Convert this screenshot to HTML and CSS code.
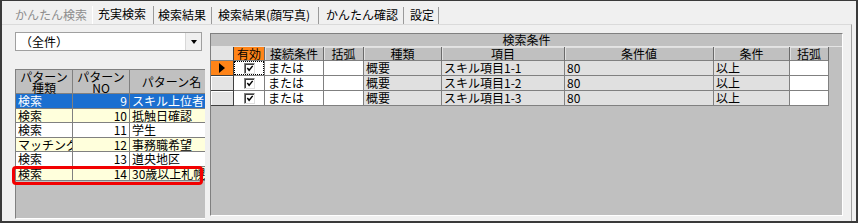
FILE: index.html
```html
<!DOCTYPE html>
<html lang="ja">
<head>
<meta charset="utf-8">
<link rel="stylesheet" href="styles.css">
</head>
<body>
<div class="window">
  <div class="tabs">
    <span class="tab tab-first disabled">かんたん検索</span>
    <span class="tab tab-active">充実検索</span>
    <span class="tab tab-3">検索結果</span>
    <span class="tab tab-4">検索結果(顔写真)</span>
    <span class="tab tab-5">かんたん確認</span>
    <span class="tab tab-6">設定</span>
  </div>
  <div class="panel">
    <div class="left">
      <div class="combo">
        <span class="combo-text">（全件）</span>
        <span class="combo-btn"><span class="down"></span></span>
      </div>
      <div class="lgrid">
        <div class="lhead">
          <div class="lc c1 two"><span class="ln">パターン</span><span class="ln">種類</span></div>
          <div class="lc c2 two"><span class="ln">パターン</span><span class="ln">NO</span></div>
          <div class="lc c3 one">パターン名</div>
        </div>
        <div class="lrow sel">
          <div class="lc c1">検索</div><div class="lc c2 num">9</div><div class="lc c3">スキル上位者</div>
        </div>
        <div class="lrow yel">
          <div class="lc c1">検索</div><div class="lc c2 num">10</div><div class="lc c3">抵触日確認</div>
        </div>
        <div class="lrow wht">
          <div class="lc c1">検索</div><div class="lc c2 num">11</div><div class="lc c3">学生</div>
        </div>
        <div class="lrow yel">
          <div class="lc c1">マッチング</div><div class="lc c2 num">12</div><div class="lc c3">事務職希望</div>
        </div>
        <div class="lrow wht">
          <div class="lc c1">検索</div><div class="lc c2 num">13</div><div class="lc c3">道央地区</div>
        </div>
        <div class="lrow yel">
          <div class="lc c1">検索</div><div class="lc c2 num">14</div><div class="lc c3">30歳以上札幌</div>
        </div>
      </div>
      <div class="mark"></div>
    </div>
    <div class="rgrid">
      <div class="caption">検索条件</div>
      <div class="rhead">
        <div class="rc w-sel selhead"></div>
        <div class="rc w-on hc orange">有効</div>
        <div class="rc w-conn hc">接続条件</div>
        <div class="rc w-par hc">括弧</div>
        <div class="rc w-kind hc">種類</div>
        <div class="rc w-item hc">項目</div>
        <div class="rc w-val hc">条件値</div>
        <div class="rc w-cond hc">条件</div>
        <div class="rc w-par2 hc">括弧</div>
      </div>
      <div class="rrow">
        <div class="rc w-sel selcell current"><span class="arrow"></span></div>
        <div class="rc w-on cbcell"><span class="focus"><span class="chk"><svg width="9" height="9" viewBox="0 0 9 9"><path d="M1.5 4 L3.5 6.5 L7.5 1.5" fill="none" stroke="#000" stroke-width="1.6"/></svg></span></span></div>
        <div class="rc w-conn wc">または</div>
        <div class="rc w-par wc"></div>
        <div class="rc w-kind gc">概要</div>
        <div class="rc w-item gc">スキル項目1-1</div>
        <div class="rc w-val gc">80</div>
        <div class="rc w-cond gc">以上</div>
        <div class="rc w-par2 wc"></div>
      </div>
      <div class="rrow">
        <div class="rc w-sel selcell"></div>
        <div class="rc w-on cbcell"><span class="nofocus"><span class="chk"><svg width="9" height="9" viewBox="0 0 9 9"><path d="M1.5 4 L3.5 6.5 L7.5 1.5" fill="none" stroke="#000" stroke-width="1.6"/></svg></span></span></div>
        <div class="rc w-conn wc">または</div>
        <div class="rc w-par wc"></div>
        <div class="rc w-kind gc">概要</div>
        <div class="rc w-item gc">スキル項目1-2</div>
        <div class="rc w-val gc">80</div>
        <div class="rc w-cond gc">以上</div>
        <div class="rc w-par2 wc"></div>
      </div>
      <div class="rrow">
        <div class="rc w-sel selcell"></div>
        <div class="rc w-on cbcell"><span class="nofocus"><span class="chk"><svg width="9" height="9" viewBox="0 0 9 9"><path d="M1.5 4 L3.5 6.5 L7.5 1.5" fill="none" stroke="#000" stroke-width="1.6"/></svg></span></span></div>
        <div class="rc w-conn wc">または</div>
        <div class="rc w-par wc"></div>
        <div class="rc w-kind gc">概要</div>
        <div class="rc w-item gc">スキル項目1-3</div>
        <div class="rc w-val gc">80</div>
        <div class="rc w-cond gc">以上</div>
        <div class="rc w-par2 wc"></div>
      </div>
    </div>
  </div>
</div>
</body>
</html>
```
FILE: styles.css
```css
* { box-sizing: border-box; }
html, body { margin: 0; padding: 0; }
body {
  width: 858px;
  height: 223px;
  overflow: hidden;
  font-family: "Noto Sans CJK JP", "Noto Sans", sans-serif;
  font-size: 12px;
  color: #000;
  background: #f0f0f0;
}
.window {
  width: 858px;
  height: 223px;
  border-top: 1px solid #3a3a3a;
  border-left: 2px solid #3a3a3a;
  border-right: 2px solid #3a3a3a;
  border-bottom: 2px solid #3a3a3a;
  background: #f0f0f0;
  display: flex;
  flex-direction: column;
}
.tabs {
  height: 23px;
  display: flex;
  align-items: flex-end;
}
.tab {
  height: 17px;
  line-height: 16px;
  white-space: nowrap;
  border-right: 1px solid #9a9a9a;
}
.tab-first { width: 90px; padding-left: 13px; border-right: none; color: #8d8d8d; }
.tab-active { width: 62px; padding-left: 5px; border-left: 1px solid #ffffff; height: 18px; }
.tab-3 { width: 58px; padding-left: 4px; }
.tab-4 { width: 107px; padding-left: 6px; }
.tab-5 { width: 85px; padding-left: 7px; }
.tab-6 { width: 35px; padding-left: 6px; }

.panel {
  flex: 1;
  margin-right: 4px;
  border-top: 1px solid #dadada;
  border-right: 1px solid #a0a0a0;
  padding: 7px 8px 2px 13px;
  display: flex;
  gap: 5px;
}
.left {
  width: 190px;
  position: relative;
  display: flex;
  flex-direction: column;
}
.combo {
  width: 187px;
  height: 19px;
  background: #fff;
  border: 1px solid #a0a0a0;
  display: flex;
  align-items: center;
  justify-content: space-between;
}
.combo-text { padding-left: 4px; line-height: 17px; }
.combo-btn {
  width: 16px;
  height: 17px;
  background: #f0f0f0;
  border-left: 1px solid #d8d8d8;
  display: flex;
  align-items: center;
  justify-content: center;
}
.down {
  width: 0;
  height: 0;
  border-left: 3.5px solid transparent;
  border-right: 3.5px solid transparent;
  border-top: 4px solid #000;
}
.lgrid {
  margin-top: 18px;
  flex: 1;
  background: #c0c0c0;
  border-top: 1px solid #808080;
  border-left: 1px solid #808080;
  border-bottom: 1px solid #ffffff;
  overflow: hidden;
}
.lhead, .lrow {
  display: flex;
  width: 240px;
  border-bottom: 1px solid #808080;
}
.lhead { height: 24px; background: #c0c0c0; }
.lrow { height: 14.5px; }
.lc {
  border-right: 1px solid #808080;
  overflow-x: clip;
  overflow-y: visible;
  white-space: nowrap;
  line-height: 13.5px;
  padding-left: 2px;
}
.c1 { width: 57px; }
.c2 { width: 57px; }
.c3 { width: 84px; }
.lhead .lc { text-align: center; padding: 0; }
.two {
  display: flex;
  flex-direction: column;
  align-items: center;
  justify-content: center;
}
.ln { display: block; line-height: 11px; height: 11px; }
.one { line-height: 23px; }
.num { text-align: right; padding-left: 0; padding-right: 2px; }
.sel { background: #1b6fd0; color: #fff; }
.yel { background: #ffffdc; }
.wht { background: #ffffff; }
.mark {
  position: absolute;
  left: -3px;
  top: 134px;
  width: 191px;
  height: 19px;
  border: 3px solid #f20000;
  border-radius: 4px;
}

.rgrid {
  margin-top: 1px;
  width: 633px;
  height: 183px;
  background: #c0c0c0;
  border-top: 1px solid #808080;
  border-left: 1px solid #808080;
  border-right: 1px solid #ffffff;
  border-bottom: 1px solid #ffffff;
}
.caption {
  height: 13px;
  line-height: 12px;
  text-align: center;
  background: #c0c0c0;
  border-bottom: 1px solid #e4e4e4;
}
.rhead, .rrow {
  display: flex;
}
.rhead { height: 14px; }
.rrow { height: 15px; }
.rc {
  height: 100%;
  border-right: 1px solid #808080;
  border-bottom: 1px solid #808080;
  white-space: nowrap;
  overflow-x: clip;
  overflow-y: visible;
  line-height: 13px;
}
.rrow .rc { line-height: 14px; }
.w-sel { width: 23px; }
.w-on { width: 31px; }
.w-conn { width: 59px; }
.w-par { width: 40px; }
.w-kind { width: 78px; }
.w-item { width: 123px; }
.w-val { width: 149px; }
.w-cond { width: 76px; }
.w-par2 { width: 39px; }
.hc {
  background: #c0c0c0;
  text-align: center;
  box-shadow: inset 1px 1px 0 #e0e0e0;
  border-right-color: #6a6a6a;
}
.hc.orange { background: #ff8418; box-shadow: none; }
.selhead { background: #e4e4e4; border-right-color: #404040; }
.selcell {
  background: #e4e4e4;
  border-right: 1px solid #404040;
  border-bottom: 1px solid #404040;
  box-shadow: inset 1px 1px 0 #ffffff;
  display: flex;
  align-items: center;
  justify-content: center;
}
.selcell.current { background: #ff8418; box-shadow: none; }
.arrow {
  width: 0;
  height: 0;
  border-left: 6px solid #000;
  border-top: 5px solid transparent;
  border-bottom: 5px solid transparent;
}
.wc { background: #ffffff; padding-left: 3px; }
.gc { background: #e0e0e0; padding-left: 2px; }
.cbcell { padding: 0; display: flex; background: #ffffff; }
.focus, .nofocus {
  flex: 1;
  display: flex;
  align-items: center;
  justify-content: center;
  margin: 1px;
}
.focus { outline: 1px dotted #000; outline-offset: 0; }
.chk {
  width: 11px;
  height: 11px;
  background: #fff;
  border-top: 1px solid #808080;
  border-left: 1px solid #808080;
  border-right: 1px solid #e0e0e0;
  border-bottom: 1px solid #e0e0e0;
  box-shadow: inset 1px 1px 0 #404040;
  display: flex;
  align-items: center;
  justify-content: center;
}
.chk svg { display: block; margin: 1px 0 0 1px; }
```
